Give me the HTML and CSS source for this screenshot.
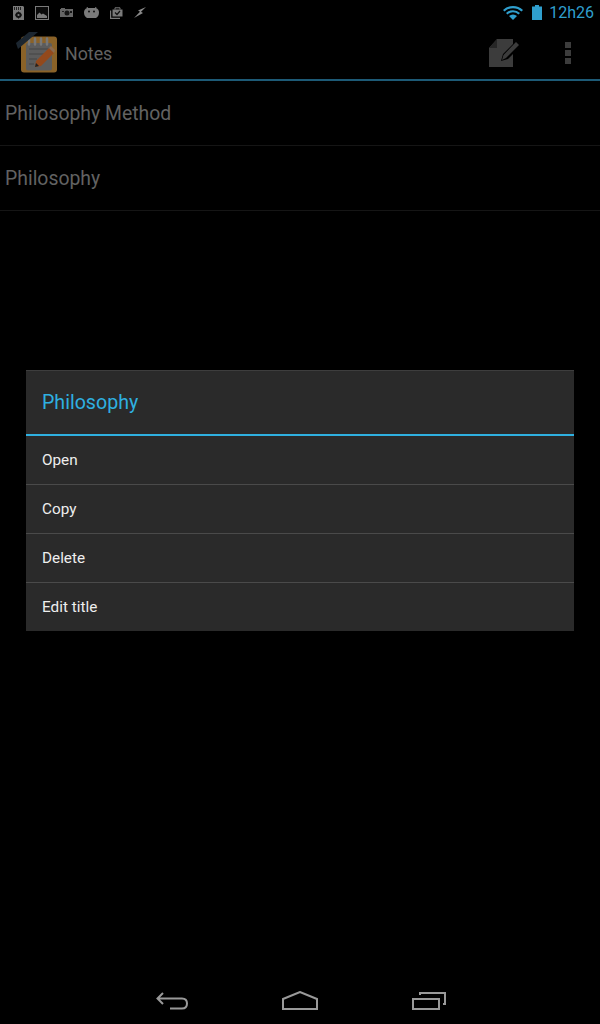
FILE: index.html
```html
<!DOCTYPE html>
<html lang="en">
<head>
    <meta charset="UTF-8">
    <meta name="viewport" content="width=device-width, initial-scale=1.0">
    <title>Notes</title>
    <link rel="stylesheet" href="styles.css">
</head>
<body>
    <div class="screen">
        <!-- status bar -->
        <div class="status-bar">
            <div class="status-icons">
                <svg width="11" height="14" viewBox="0 0 11 14"><path d="M0 0h10l1 1v13H0z" fill="#7a7a7a"/><path d="M1 1h1v3H1zM3 1h1v3H3zM5 1h1v3H5zM7 1h1v3H7z" fill="#222"/><circle cx="5.500" cy="9" r="3" fill="#111"/><path d="M5 5.500h1v7H5zM2 8.500h7v1H2z" fill="#111"/><circle cx="5.500" cy="9" r="1.100" fill="#7a7a7a"/></svg>
                <svg width="14" height="14" viewBox="0 0 14 14"><rect x=".5" y=".5" width="13" height="13" fill="#0a0a0a" stroke="#7a7a7a"/><path d="M2 12V9l2.500-2.500 2 2 1.500-1 4 2.500v2z" fill="#7a7a7a"/></svg>
                <svg width="13" height="9" viewBox="0 0 13 9"><rect y="1" width="13" height="8" fill="#666"/><rect x="1" width="4" height="2" fill="#666"/><circle cx="7" cy="5" r="2.500" fill="#151515"/><rect x="10" y="3" width="2" height="2" fill="#151515"/><rect x="2" y="3" width="2" height="1" fill="#222"/></svg>
                <svg width="15" height="11" viewBox="0 0 15 11"><path d="M4 2 3 0M11 2l1-2" stroke="#7a7a7a"/><path d="M3 1h9q3 1 3 4.500T12 11H3q-3-2-3-5.500T3 1z" fill="#7a7a7a"/><circle cx="5" cy="4.500" r="1" fill="#111"/><circle cx="10" cy="4.500" r="1" fill="#111"/></svg>
                <svg width="13" height="12" viewBox="0 0 13 12"><path d="M0 3.500V12h10v-1.200H1.200V3.500z" fill="#7a7a7a"/><path d="M2.500 2.500h10v7h-10z" fill="#7a7a7a"/><path d="M5 2.500V.8h5v1.700" fill="none" stroke="#7a7a7a"/><path d="m5 5.500 2 2 3-3.500" fill="none" stroke="#111" stroke-width="1.200"/></svg>
                <svg width="12" height="11" viewBox="0 0 12 11"><path d="M12 0 4 3.500l2 1.300L0 11 9 6 7 4.800z" fill="#8a8a8a"/></svg>
            </div>
            <div class="status-right">
                <svg width="20" height="14" viewBox="0 0 20 14"><path d="M0 4a14.500 14.500 0 0 1 20 0l-1.500 1.500a12.500 12.500 0 0 0-17 0z" fill="#2f9fce"/><path d="M3 7a10 10 0 0 1 14 0l-1.500 1.500a8 8 0 0 0-11 0z" fill="#2f9fce"/><path d="M6 10a6 6 0 0 1 8 0l-4 4z" fill="#2f9fce"/></svg>
                <svg class="battery" width="10" height="15" viewBox="0 0 10 15"><path d="M3 0h4v1.500h3V15H0V1.500h3z" fill="#2f9fce"/></svg>
                <span class="clock">12h26</span>
            </div>
        </div>

        <!-- action bar -->
        <div class="action-bar">
            <svg class="app-icon" width="44" height="46" viewBox="0 0 44 46">
                <rect x="7" y="5.500" width="36" height="36" rx="3" fill="#8a6228"/>
                <rect x="12" y="12" width="26" height="27.500" rx="2" fill="#5c5c5c"/>
                <path d="M15 7.500v6M21 7.500v6M27 7.500v6M33 7.500v6" stroke="#777" stroke-width="2.500" stroke-linecap="round"/>
                <path d="M15 18h19M15 23h16M15 28h8M15 33h5" stroke="#444"/>
                <path d="M22 30l13-13 5 5-13 13-6 1z" fill="#93491c"/>
                <path d="M35 17l2-2 4 4-1 3z" fill="#8a6a50"/>
                <path d="M21 36l1-4 3 3z" fill="#222"/>
                <path d="M2 12 15 1h9L4 18z" fill="#1c2630"/>
            </svg>
            <span class="app-title">Notes</span>
            <div class="action-icons">
                <svg width="30" height="28" viewBox="0 0 30 28"><path d="M8 0h16v5L14 15l-2 7 7-2 5-5v13H0V9z" fill="#3c3c3c"/><path d="M8 0v9H0z" fill="#262626"/><path d="m27 3 3 3-13 13-4 2 1.500-5z" fill="#3c3c3c"/></svg>
                <div class="overflow-dots"><i></i><i></i><i></i></div>
            </div>
        </div>

        <!-- note list -->
        <ul class="note-list">
            <li>Philosophy Method</li>
            <li>Philosophy</li>
        </ul>

        <!-- context menu -->
        <div class="dialog">
            <div class="dialog-title">Philosophy</div>
            <div class="dialog-item">Open</div>
            <div class="dialog-item">Copy</div>
            <div class="dialog-item">Delete</div>
            <div class="dialog-item">Edit title</div>
        </div>

        <!-- nav bar -->
        <div class="nav-bar">
            <svg width="32" height="18" viewBox="0 0 32 18"><path d="M7 1 1.500 6.500 7 12M2 6.500h24q5 0 5 5t-5 5H14" fill="none" stroke="#999" stroke-width="2"/></svg>
            <svg width="36" height="19" viewBox="0 0 36 19"><path d="M1 8 18 1l17 7v10H1z" fill="none" stroke="#999" stroke-width="2"/></svg>
            <svg width="34" height="18" viewBox="0 0 34 18"><rect x="1" y="7" width="26" height="10" fill="none" stroke="#999" stroke-width="2"/><path d="M8 3V1h25v11h-2" fill="none" stroke="#999" stroke-width="2"/></svg>
        </div>
    </div>
</body>
</html>
```

FILE: styles.css
```css
* {
    box-sizing: border-box;
}
body {
    margin: 0;
    background-color: #000;
    font-family: Roboto, "Open Sans", sans-serif;
}
.screen {
    position: relative;
    width: 600px;
    height: 1024px;
    display: flex;
    flex-direction: column;
    overflow: hidden;
}
.status-bar {
    height: 25px;
    display: flex;
    justify-content: space-between;
    align-items: center;
    padding: 0 6px 0 13px;
}
.status-icons {
    display: flex;
    align-items: center;
    gap: 11px;
}
.status-right {
    display: flex;
    align-items: center;
}
.battery {
    margin-left: 9px;
}
.clock {
    margin-left: 7px;
    font-size: 16px;
    color: #2f9fce;
}
.action-bar {
    height: 56px;
    display: flex;
    align-items: center;
    border-bottom: 2px solid #1d5a76;
    padding: 4px 0 0 14px;
}
.app-title {
    margin: 0 0 2px 7px;
    font-size: 17.800px;
    color: #626262;
}
.action-icons {
    margin: 0 0 2px auto;
    display: flex;
    align-items: center;
    padding-right: 29px;
    gap: 46px;
}
.overflow-dots {
    display: flex;
    flex-direction: column;
    gap: 2px;
}
.overflow-dots i {
    display: block;
    width: 6px;
    height: 6px;
    background-color: #3c3c3c;
}
.note-list {
    list-style: none;
    margin: 0;
    padding: 0;
}
.note-list li {
    height: 65px;
    display: flex;
    align-items: center;
    padding-left: 5px;
    font-size: 19.400px;
    color: #626262;
    border-bottom: 1px solid #151515;
}
.dialog {
    position: absolute;
    left: 26px;
    top: 370px;
    width: 548px;
    height: 261px;
    background-color: #2a2a2a;
    border-top: 1px solid #3d3d3d;
}
.dialog-title {
    height: 65px;
    display: flex;
    align-items: center;
    padding-left: 16px;
    font-size: 19.600px;
    color: #2fb0e0;
    border-bottom: 2px solid #2fb0e0;
}
.dialog-item {
    height: 49px;
    display: flex;
    align-items: center;
    padding-left: 16px;
    font-size: 15.300px;
    color: #eee;
    border-bottom: 1px solid #4a4a4a;
}
.dialog-item:last-child {
    border-bottom-color: transparent;
}
.nav-bar {
    position: absolute;
    left: 0;
    bottom: 0;
    width: 100%;
    height: 48px;
    display: flex;
    justify-content: center;
    align-items: center;
    gap: 94px;
    padding: 1px 0 0 2px;
}
```
